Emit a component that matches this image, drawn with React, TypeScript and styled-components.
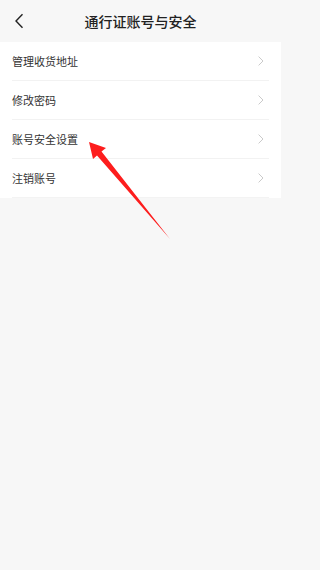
import styled, { createGlobalStyle } from 'styled-components';

const GlobalStyle = createGlobalStyle`
  html, body {
    margin: 0;
    padding: 0;
    background: #f7f7f7;
    font-family: "Noto Sans CJK SC", "Noto Sans", sans-serif;
  }
  #root {
    min-height: 570px;
  }
`;

const menuItems = ['管理收货地址', '修改密码', '账号安全设置', '注销账号'];

const Page = styled.div`
  position: relative;
  width: 281px;
  min-height: 570px;
  background: #f7f7f7;
`;

const Header = styled.header`
  height: 42px;
  display: flex;
  align-items: center;
  justify-content: center;
  position: relative;
  background: #f7f7f7;

  h1 {
    margin: 0;
    font-size: 14px;
    font-weight: 500;
    color: #222;
    letter-spacing: 0;
  }
`;

const BackButton = styled.button`
  position: absolute;
  left: 11px;
  top: 12px;
  width: 16px;
  height: 18px;
  padding: 0;
  border: none;
  background: none;
  display: flex;
  align-items: center;
  justify-content: center;
`;

const List = styled.ul`
  margin: 0;
  padding: 0 12px;
  list-style: none;
  background: #fff;
`;

const Row = styled.li<{ $last?: boolean }>`
  height: 39px;
  display: flex;
  align-items: center;
  justify-content: space-between;
  border-bottom: 1px solid ${(p) => (p.$last ? '#f3f3f3' : '#f2f2f2')};
  box-sizing: border-box;

  span {
    font-size: 11px;
    color: #333;
  }
`;

const Chevron = styled.svg`
  width: 6px;
  height: 10px;
  margin-right: 5px;
`;

const Arrow = styled.svg`
  position: absolute;
  left: 0;
  top: 0;
  width: 281px;
  height: 570px;
  pointer-events: none;
`;

function App() {
  return (
    <>
      <GlobalStyle />
      <Page>
        <Header>
          <BackButton>
            <svg width="10" height="16" viewBox="0 0 10 16">
              <path d="M8.5 1.2 L2 8 L8.5 14.8" fill="none" stroke="#222" strokeWidth="1.4" />
            </svg>
          </BackButton>
          <h1>通行证账号与安全</h1>
        </Header>
        <List>
          {menuItems.map((item, i) => (
            <Row key={item} $last={i === menuItems.length - 1}>
              <span>{item}</span>
              <Chevron viewBox="0 0 6 10">
                <path d="M0.6 0.6 L5 5 L0.6 9.4" fill="none" stroke="#c4c4c4" strokeWidth="0.9" />
              </Chevron>
            </Row>
          ))}
        </List>
        <Arrow viewBox="0 0 281 570">
          <polygon points="89,142 106,148 101.5,151.5 170,239 97,155.5 93,159" fill="#fd1d1d" />
        </Arrow>
      </Page>
    </>
  );
}

export default App;
